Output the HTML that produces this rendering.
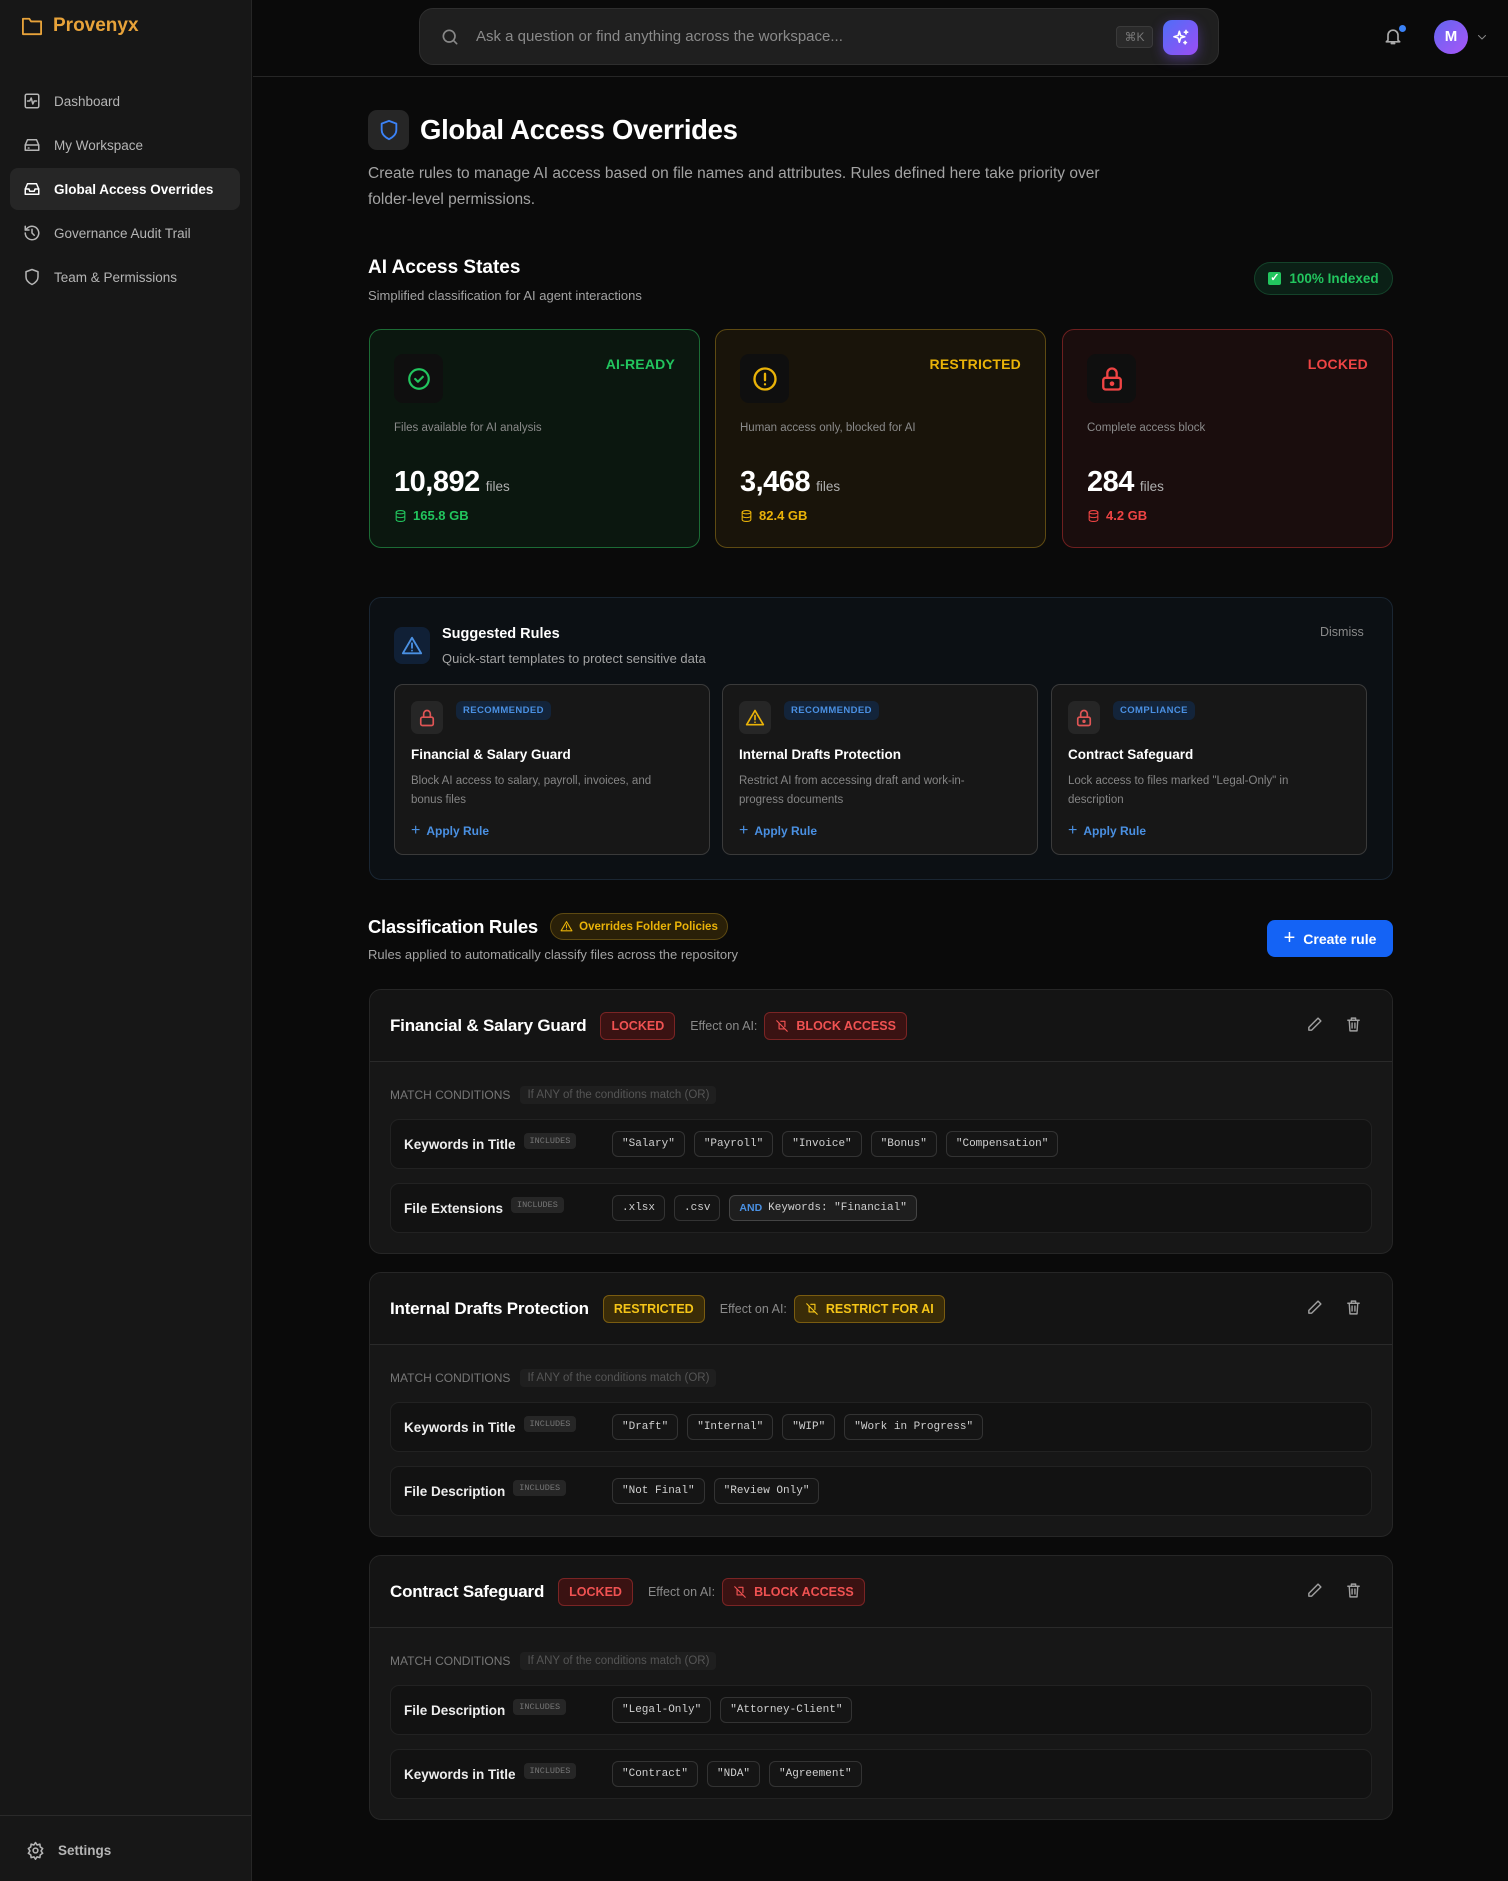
<!DOCTYPE html>
<html><head><meta charset="utf-8"><style>
*{box-sizing:border-box;margin:0;padding:0}
body{width:1508px;height:1881px;background:#0a0a0a;font-family:"Liberation Sans",sans-serif;color:#e5e5e5;position:relative;overflow:hidden}
.abs{position:absolute}
.side{left:0;top:0;width:252px;height:1881px;background:#171717;border-right:1px solid #262626}
.nav{position:absolute;left:10px;width:230px;height:42px;border-radius:8px;display:flex;align-items:center;padding-left:13px;font-size:13.5px;color:#b5b5b5}
.nav svg{margin-right:13px}
.nav.act{background:#262626;color:#fff;font-weight:bold}
.ic{fill:none;stroke:currentColor;stroke-width:2;stroke-linecap:round;stroke-linejoin:round}
.hdr{left:253px;top:0;right:0;height:77px;border-bottom:1px solid #262626}
.card{border-radius:12px;position:absolute;top:329px;width:331px;height:219px;border:1px solid}
.card .ib{position:absolute;left:24px;top:24px;width:49px;height:49px;border-radius:9px;display:flex;align-items:center;justify-content:center}
.card .lb{position:absolute;right:24px;top:26px;font-size:14px;font-weight:bold;letter-spacing:.2px}
.card .d{position:absolute;left:24px;top:92px;font-size:11.5px;color:#8a8a8a}
.card .n{position:absolute;left:24px;top:136px;font-size:29px;font-weight:bold;color:#fff;letter-spacing:-.5px}
.card .n span{font-size:13.5px;font-weight:normal;color:#b0b0b0;margin-left:6px;letter-spacing:0}
.card .g{position:absolute;left:24px;top:178px;font-size:13px;font-weight:bold;display:flex;align-items:center;gap:6px}
.sc{position:absolute;top:684px;width:316px;height:171px;border:1px solid #3a3a3a;border-radius:9px;background:#171717}
.sc .ib{position:absolute;left:16px;top:16px;width:32px;height:33px;border-radius:7px;background:#262626;display:flex;align-items:center;justify-content:center}
.sc .bd{position:absolute;left:61px;top:16px;height:19px;padding:0 7px;border-radius:6px;background:#13243a;color:#4a90e2;font-size:9.5px;font-weight:bold;line-height:19px;letter-spacing:.4px}
.sc .t{position:absolute;left:16px;top:62px;font-size:13.5px;font-weight:bold;color:#fff}
.sc .ds{position:absolute;left:16px;top:87px;width:260px;font-size:11.5px;line-height:19px;color:#858585}
.sc .ap{position:absolute;left:16px;top:137px;font-size:12px;font-weight:bold;color:#4a90e2;display:flex;align-items:center;gap:6px}
.rc{position:absolute;left:369px;width:1024px;height:265px;border:1px solid #262626;border-radius:12px;background:#171717;overflow:hidden}
.rh{height:72px;border-bottom:1px solid #2a2a2a;background:#141414;display:flex;align-items:center;padding-left:20px;position:relative}
.rh .tt{font-size:17px;font-weight:bold;color:#fff;margin-right:14px;letter-spacing:-.2px}
.bdg{height:28px;border-radius:6px;display:flex;align-items:center;padding:0 10px;font-size:12.5px;font-weight:bold;border:1px solid}
.lock{background:#3a1212;border-color:#7a2424;color:#f05252}
.rest{background:#3a2c08;border-color:#7a5c10;color:#f5c518}
.ef{font-size:12.5px;color:#8a8a8a;margin:0 7px 0 15px}
.acts{position:absolute;right:30px;top:26px;display:flex;gap:22px;color:#a0a0a0}
.mc{position:absolute;left:20px;top:96px;display:flex;align-items:center;font-size:12px;color:#777}
.mc span{margin-left:10px;background:#1f1f1f;color:#555;padding:3px 7px;border-radius:4px;font-size:11.5px}
.row{position:absolute;left:20px;width:982px;height:50px;border:1px solid #222;border-radius:9px;background:#121212;display:flex;align-items:center;padding-left:13px}
.row .l{font-size:13.5px;font-weight:bold;color:#eee}
.row .inc{margin-left:8px;background:#262626;color:#777;font-family:"Liberation Mono",monospace;font-size:8.5px;padding:3px 6px;border-radius:4px;margin-top:-6px}
.chips{position:absolute;left:221px;display:flex;gap:9px}
.chip{height:26px;border:1px solid #333;border-radius:6px;background:#151515;font-family:"Liberation Mono",monospace;font-size:11px;color:#d0d0d0;display:flex;align-items:center;padding:0 9px}
</style></head><body>
<div class="abs side">
 <div class="abs" style="left:21px;top:15px;display:flex;align-items:center;gap:10px;color:#e8a33a;font-size:19px;font-weight:bold">
  <svg width="22" height="20" viewBox="0 0 24 22" class="ic" style="stroke:#e8a33a"><path d="M2 3h7l2 3h11v14H2z"/></svg>Provenyx</div>
 <div class="nav" style="top:80px"><svg width="18" height="18" viewBox="0 0 24 24" class="ic"><rect x="3" y="3" width="18" height="18" rx="2"/><path d="M6 12h3l2-4 2 8 2-4h3"/></svg>Dashboard</div>
 <div class="nav" style="top:124px"><svg width="18" height="18" viewBox="0 0 24 24" class="ic"><path d="M3 12l3-7h12l3 7v7H3z"/><path d="M3 12h18M7 16h1"/></svg>My Workspace</div>
 <div class="nav act" style="top:168px"><svg width="18" height="18" viewBox="0 0 24 24" class="ic"><path d="M3 12l3-7h12l3 7v7H3z"/><path d="M3 12h5l1 3h6l1-3h5"/></svg>Global Access Overrides</div>
 <div class="nav" style="top:212px"><svg width="18" height="18" viewBox="0 0 24 24" class="ic"><path d="M3 12a9 9 0 1 0 3-6.7L3 8"/><path d="M3 3v5h5M12 7v5l3 3"/></svg>Governance Audit Trail</div>
 <div class="nav" style="top:256px"><svg width="18" height="18" viewBox="0 0 24 24" class="ic"><path d="M12 2l8 3v7c0 5-4 8-8 10-4-2-8-5-8-10V5z"/></svg>Team &amp; Permissions</div>
 <div class="abs" style="left:0;top:1815px;width:251px;border-top:1px solid #2a2a2a"></div>
 <div class="abs" style="left:26px;top:1841px;display:flex;align-items:center;gap:13px;font-size:13.5px;color:#b5b5b5;font-weight:bold"><svg width="19" height="19" viewBox="0 0 24 24" class="ic"><circle cx="12" cy="12" r="3"/><path d="M12 2l2 3 3.5-1 .5 3.5 3 2-2 3 2 3-3 2-.5 3.5L14 20l-2 3-2-3-3.5 1-.5-3.5-3-2 2-3-2-3 3-2 .5-3.5L10 5z"/></svg>Settings</div>
</div>
<div class="abs hdr">
 <div class="abs" style="left:166px;top:8px;width:800px;height:57px;background:#1f1f1f;border:1px solid #2e2e2e;border-radius:14px">
  <svg class="abs ic" style="left:20px;top:18px;color:#888" width="20" height="20" viewBox="0 0 24 24"><circle cx="11" cy="11" r="7"/><path d="M20 20l-4-4"/></svg>
  <div class="abs" style="left:56px;top:19px;font-size:15px;color:#8a8a8a">Ask a question or find anything across the workspace...</div>
  <div class="abs" style="left:696px;top:17px;width:37px;height:22px;border:1px solid #3a3a3a;background:#2a2a2a;border-radius:4px;font-size:12px;color:#777;text-align:center;line-height:20px">⌘K</div>
  <div class="abs" style="left:743px;top:11px;width:35px;height:35px;border-radius:9px;background:linear-gradient(135deg,#4f6ef7,#9b4df5);box-shadow:0 4px 12px rgba(130,80,250,.4);display:flex;align-items:center;justify-content:center"><svg width="20" height="20" viewBox="0 0 24 24" class="ic" style="color:#fff"><path d="M10 4l1.5 5 5 1.5-5 1.5L10 17l-1.5-5L3.5 10.5l5-1.5zM18 3v4M16 5h4M17 16v3M15.5 17.5h3"/></svg></div>
 </div>
 <svg class="abs ic" style="left:1130px;top:25px;color:#aaa" width="20" height="22" viewBox="0 0 24 24"><path d="M6 17V11a6 6 0 0 1 12 0v6l2 2H4zM10 21h4"/></svg>
 <div class="abs" style="left:1146px;top:25px;width:7px;height:7px;border-radius:50%;background:#3b82f6"></div>
 <div class="abs" style="left:1181px;top:20px;width:34px;height:34px;border-radius:50%;background:linear-gradient(135deg,#6366f1,#a855f7);color:#fff;font-weight:bold;font-size:15px;text-align:center;line-height:34px">M</div>
 <svg class="abs ic" style="left:1223px;top:31px;color:#888" width="12" height="12" viewBox="0 0 24 24"><path d="M5 9l7 7 7-7"/></svg>
</div>

<div class="abs" style="left:368px;top:110px;width:41px;height:40px;background:#262626;border-radius:9px;display:flex;align-items:center;justify-content:center"><svg width="22" height="24" viewBox="0 0 24 24" class="ic" style="color:#3b82f6"><path d="M12 2l8 3v7c0 5-4 8-8 10-4-2-8-5-8-10V5z"/></svg></div>
<div class="abs" style="left:420px;top:114px;font-size:27.5px;font-weight:bold;color:#fff;letter-spacing:-.3px">Global Access Overrides</div>
<div class="abs" style="left:368px;top:161px;width:760px;font-size:15.5px;line-height:26px;color:#a3a3a3">Create rules to manage AI access based on file names and attributes. Rules defined here take priority over folder-level permissions.</div>

<div class="abs" style="left:368px;top:257px;font-size:19px;font-weight:bold;color:#fff">AI Access States</div>
<div class="abs" style="left:368px;top:288px;font-size:13px;color:#a3a3a3">Simplified classification for AI agent interactions</div>
<div class="abs" style="left:1254px;top:262px;width:139px;height:33px;border-radius:17px;background:#0b2016;border:1px solid #14432a;display:flex;align-items:center;justify-content:center;gap:8px;font-size:13.5px;font-weight:bold;color:#22c55e"><span style="width:13px;height:13px;background:#22c55e;border-radius:2px;color:#fff;font-size:11px;line-height:13px;text-align:center">✓</span>100% Indexed</div>

<div class="card" style="left:369px;background:#0b170f;border-color:#1c6b35">
 <div class="ib" style="background:#0f0f0f"><svg width="26" height="26" viewBox="0 0 24 24" class="ic" style="color:#22c55e"><circle cx="12" cy="12" r="9"/><path d="M8.5 12l2.5 2.5 4.5-4.5"/></svg></div>
 <div class="lb" style="color:#22c55e">AI-READY</div>
 <div class="d">Files available for AI analysis</div>
 <div class="n">10,892<span>files</span></div>
 <div class="g" style="color:#22c55e"><svg width="13" height="14" viewBox="0 0 24 24" class="ic"><ellipse cx="12" cy="5" rx="8" ry="3"/><path d="M4 5v14c0 1.7 3.6 3 8 3s8-1.3 8-3V5M4 12c0 1.7 3.6 3 8 3s8-1.3 8-3"/></svg>165.8 GB</div>
</div>
<div class="card" style="left:715px;background:#19140a;border-color:#5e4a12">
 <div class="ib" style="background:#0f0f0f"><svg width="28" height="28" viewBox="0 0 24 24" class="ic" style="color:#eab308"><circle cx="12" cy="12" r="9"/><path d="M12 7.5v5.5M12 16.5v.1"/></svg></div>
 <div class="lb" style="color:#eab308">RESTRICTED</div>
 <div class="d">Human access only, blocked for AI</div>
 <div class="n">3,468<span>files</span></div>
 <div class="g" style="color:#eab308"><svg width="13" height="14" viewBox="0 0 24 24" class="ic"><ellipse cx="12" cy="5" rx="8" ry="3"/><path d="M4 5v14c0 1.7 3.6 3 8 3s8-1.3 8-3V5M4 12c0 1.7 3.6 3 8 3s8-1.3 8-3"/></svg>82.4 GB</div>
</div>
<div class="card" style="left:1062px;background:#1a0d0d;border-color:#6e1f1f">
 <div class="ib" style="background:#0f0f0f"><svg width="28" height="28" viewBox="0 0 24 24" class="ic" style="color:#ef4444"><rect x="4.5" y="11" width="15" height="10" rx="2"/><path d="M8 11V7a4 4 0 0 1 8 0v4"/><circle cx="12" cy="16" r="1" fill="currentColor"/></svg></div>
 <div class="lb" style="color:#ef4444">LOCKED</div>
 <div class="d">Complete access block</div>
 <div class="n">284<span>files</span></div>
 <div class="g" style="color:#ef4444"><svg width="13" height="14" viewBox="0 0 24 24" class="ic"><ellipse cx="12" cy="5" rx="8" ry="3"/><path d="M4 5v14c0 1.7 3.6 3 8 3s8-1.3 8-3V5M4 12c0 1.7 3.6 3 8 3s8-1.3 8-3"/></svg>4.2 GB</div>
</div>

<div class="abs" style="left:369px;top:597px;width:1024px;height:283px;border:1px solid #1a2633;border-radius:12px;background:#0c1014"></div>
<div class="abs" style="left:394px;top:627px;width:36px;height:37px;border-radius:8px;background:#102036;display:flex;align-items:center;justify-content:center"><svg width="22" height="22" viewBox="0 0 24 24" class="ic" style="color:#4a90e2"><path d="M12 3L2 20h20z"/><path d="M12 9v5M12 17v.1"/></svg></div>
<div class="abs" style="left:442px;top:626px;font-size:14.5px;font-weight:bold;color:#fff">Suggested Rules</div>
<div class="abs" style="left:442px;top:651px;font-size:13px;color:#a3a3a3">Quick-start templates to protect sensitive data</div>
<div class="abs" style="left:1320px;top:625px;font-size:12.5px;color:#8a8a8a">Dismiss</div>

<div class="sc" style="left:394px"><div class="ib"><svg width="20" height="20" viewBox="0 0 24 24" class="ic" style="color:#e05555"><rect x="4.5" y="11" width="15" height="10" rx="2"/><path d="M8 11V7a4 4 0 0 1 8 0v4"/></svg></div><div class="bd">RECOMMENDED</div><div class="t">Financial &amp; Salary Guard</div><div class="ds">Block AI access to salary, payroll, invoices, and bonus files</div><div class="ap"><span style="font-size:16px;font-weight:normal">+</span>Apply Rule</div></div>
<div class="sc" style="left:722px"><div class="ib"><svg width="20" height="20" viewBox="0 0 24 24" class="ic" style="color:#eab308"><path d="M12 3L2 20h20z"/><path d="M12 9v5M12 17v.1"/></svg></div><div class="bd">RECOMMENDED</div><div class="t">Internal Drafts Protection</div><div class="ds">Restrict AI from accessing draft and work-in-progress documents</div><div class="ap"><span style="font-size:16px;font-weight:normal">+</span>Apply Rule</div></div>
<div class="sc" style="left:1051px"><div class="ib"><svg width="20" height="20" viewBox="0 0 24 24" class="ic" style="color:#e05555"><rect x="4.5" y="11" width="15" height="10" rx="2"/><path d="M8 11V7a4 4 0 0 1 8 0v4"/><circle cx="12" cy="16" r="1" fill="currentColor"/></svg></div><div class="bd">COMPLIANCE</div><div class="t">Contract Safeguard</div><div class="ds">Lock access to files marked "Legal-Only" in description</div><div class="ap"><span style="font-size:16px;font-weight:normal">+</span>Apply Rule</div></div>

<div class="abs" style="left:368px;top:916px;font-size:18.5px;font-weight:bold;color:#fff;letter-spacing:-.3px">Classification Rules</div>
<div class="abs" style="left:550px;top:913px;width:178px;height:27px;border-radius:14px;background:#2a2008;border:1px solid #5e4a12;display:flex;align-items:center;justify-content:center;gap:6px;font-size:11.5px;font-weight:bold;color:#eab308"><svg width="13" height="13" viewBox="0 0 24 24" class="ic"><path d="M12 3L2 20h20z"/><path d="M12 9v5M12 17v.1"/></svg>Overrides Folder Policies</div>
<div class="abs" style="left:368px;top:947px;font-size:13px;color:#a3a3a3">Rules applied to automatically classify files across the repository</div>
<div class="abs" style="left:1267px;top:920px;width:126px;height:37px;border-radius:8px;background:#1463f5;display:flex;align-items:center;justify-content:center;gap:8px;font-size:14px;font-weight:bold;color:#fff"><span style="font-size:20px;font-weight:normal">+</span>Create rule</div>

<!-- rule 1 -->
<div class="rc" style="top:989px">
 <div class="rh"><span class="tt">Financial &amp; Salary Guard</span><span class="bdg lock">LOCKED</span><span class="ef">Effect on AI:</span><span class="bdg lock"><svg width="14" height="14" viewBox="0 0 24 24" class="ic" style="margin-right:7px"><path d="M3 3l18 18M7 7v10h10M10 4h7v9"/></svg>BLOCK ACCESS</span>
  <div class="acts"><svg width="17" height="17" viewBox="0 0 24 24" class="ic"><path d="M17 3l4 4L8 20H4v-4z"/></svg><svg width="17" height="17" viewBox="0 0 24 24" class="ic"><path d="M4 6h16M9 6V3h6v3M6 6l1 15h10l1-15M10 10v7M14 10v7"/></svg></div></div>
 <div class="mc">MATCH CONDITIONS<span>If ANY of the conditions match (OR)</span></div>
 <div class="row" style="top:129px"><span class="l">Keywords in Title</span><span class="inc">INCLUDES</span><div class="chips"><span class="chip">"Salary"</span><span class="chip">"Payroll"</span><span class="chip">"Invoice"</span><span class="chip">"Bonus"</span><span class="chip">"Compensation"</span></div></div>
 <div class="row" style="top:193px"><span class="l">File Extensions</span><span class="inc">INCLUDES</span><div class="chips"><span class="chip">.xlsx</span><span class="chip">.csv</span><span class="chip" style="background:#1e1e1e;border-color:#444"><b style="color:#4a90e2;font-family:'Liberation Sans';font-size:10.5px;margin-right:6px">AND</b>Keywords: "Financial"</span></div></div>
</div>
<!-- rule 2 -->
<div class="rc" style="top:1272px">
 <div class="rh"><span class="tt">Internal Drafts Protection</span><span class="bdg rest">RESTRICTED</span><span class="ef">Effect on AI:</span><span class="bdg rest"><svg width="14" height="14" viewBox="0 0 24 24" class="ic" style="margin-right:7px"><path d="M3 3l18 18M7 7v10h10M10 4h7v9"/></svg>RESTRICT FOR AI</span>
  <div class="acts"><svg width="17" height="17" viewBox="0 0 24 24" class="ic"><path d="M17 3l4 4L8 20H4v-4z"/></svg><svg width="17" height="17" viewBox="0 0 24 24" class="ic"><path d="M4 6h16M9 6V3h6v3M6 6l1 15h10l1-15M10 10v7M14 10v7"/></svg></div></div>
 <div class="mc">MATCH CONDITIONS<span>If ANY of the conditions match (OR)</span></div>
 <div class="row" style="top:129px"><span class="l">Keywords in Title</span><span class="inc">INCLUDES</span><div class="chips"><span class="chip">"Draft"</span><span class="chip">"Internal"</span><span class="chip">"WIP"</span><span class="chip">"Work in Progress"</span></div></div>
 <div class="row" style="top:193px"><span class="l">File Description</span><span class="inc">INCLUDES</span><div class="chips"><span class="chip">"Not Final"</span><span class="chip">"Review Only"</span></div></div>
</div>
<!-- rule 3 -->
<div class="rc" style="top:1555px">
 <div class="rh"><span class="tt">Contract Safeguard</span><span class="bdg lock">LOCKED</span><span class="ef">Effect on AI:</span><span class="bdg lock"><svg width="14" height="14" viewBox="0 0 24 24" class="ic" style="margin-right:7px"><path d="M3 3l18 18M7 7v10h10M10 4h7v9"/></svg>BLOCK ACCESS</span>
  <div class="acts"><svg width="17" height="17" viewBox="0 0 24 24" class="ic"><path d="M17 3l4 4L8 20H4v-4z"/></svg><svg width="17" height="17" viewBox="0 0 24 24" class="ic"><path d="M4 6h16M9 6V3h6v3M6 6l1 15h10l1-15M10 10v7M14 10v7"/></svg></div></div>
 <div class="mc">MATCH CONDITIONS<span>If ANY of the conditions match (OR)</span></div>
 <div class="row" style="top:129px"><span class="l">File Description</span><span class="inc">INCLUDES</span><div class="chips"><span class="chip">"Legal-Only"</span><span class="chip">"Attorney-Client"</span></div></div>
 <div class="row" style="top:193px"><span class="l">Keywords in Title</span><span class="inc">INCLUDES</span><div class="chips"><span class="chip">"Contract"</span><span class="chip">"NDA"</span><span class="chip">"Agreement"</span></div></div>
</div>
</body></html>
